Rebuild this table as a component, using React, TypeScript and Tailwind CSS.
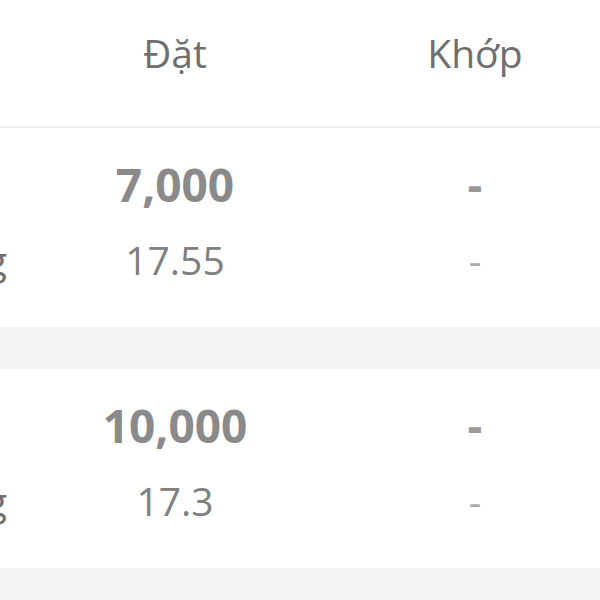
import React from "react";

type Row = { qty: string; price: string; matchQty: string; matchPrice: string };

const rows: Row[] = [
  { qty: "7,000", price: "17.55", matchQty: "-", matchPrice: "-" },
  { qty: "10,000", price: "17.3", matchQty: "-", matchPrice: "-" },
];

export default function App() {
  return (
    <div
      className="w-[600px] h-[600px] overflow-hidden bg-white"
      style={{ fontFamily: '"Open Sans", "Noto Sans", sans-serif' }}
    >
      <div className="w-[607px]">
        {/* Header */}
        <div className="grid grid-cols-[7px_336px_264px] h-[128px] pt-[29px] border-b-2 border-[#efefef] text-[39px] leading-[48px] text-[#6f6f6f]">
          <div />
          <div className="text-center">Đặt</div>
          <div className="text-center">Khớp</div>
        </div>

        {rows.map((r, i) => (
          <div key={i}>
            <div className="grid grid-cols-[7px_336px_264px] pt-[28px] pb-[43px]">
              <div className="overflow-hidden flex flex-col items-end">
                <div className="h-[56px]" />
                <div className="mt-[24px] whitespace-nowrap text-[39px] leading-[48px] text-[#6f6f6f]">
                  Giá thị trường
                </div>
              </div>
              <div className="flex flex-col items-center">
                <div className="text-[46px] leading-[56px] font-bold text-[#8a8a8a]">{r.qty}</div>
                <div className="mt-[24px] text-[39px] leading-[48px] text-[#808080]">{r.price}</div>
              </div>
              <div className="flex flex-col items-center">
                <div className="text-[46px] leading-[56px] font-bold text-[#9a9a9a]">{r.matchQty}</div>
                <div className="mt-[24px] text-[39px] leading-[48px] text-[#ababab]">{r.matchPrice}</div>
              </div>
            </div>
            <div className="h-[42px] bg-[#f3f3f3]" />
          </div>
        ))}
      </div>
    </div>
  );
}
